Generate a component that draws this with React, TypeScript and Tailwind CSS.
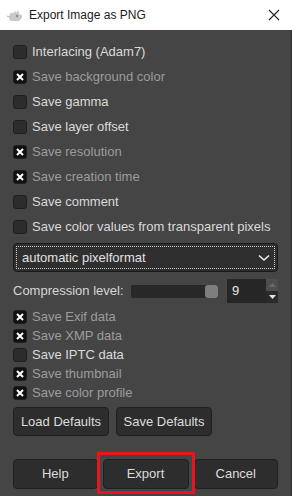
import React from 'react'

type CheckRow = {
  label: string
  checked: boolean
}

const TOP_OPTIONS: CheckRow[] = [
  { label: 'Interlacing (Adam7)', checked: false },
  { label: 'Save background color', checked: true },
  { label: 'Save gamma', checked: false },
  { label: 'Save layer offset', checked: false },
  { label: 'Save resolution', checked: true },
  { label: 'Save creation time', checked: true },
  { label: 'Save comment', checked: false },
  { label: 'Save color values from transparent pixels', checked: false },
]

const META_OPTIONS: CheckRow[] = [
  { label: 'Save Exif data', checked: true },
  { label: 'Save XMP data', checked: true },
  { label: 'Save IPTC data', checked: false },
  { label: 'Save thumbnail', checked: true },
  { label: 'Save color profile', checked: true },
]

const CheckBox: React.FC<{ checked: boolean }> = ({ checked }) => (
  <div
    className={`flex w-[14px] h-[14px] shrink-0 items-center justify-center rounded-[3px] border border-[#1e1e1e] ${
      checked ? 'bg-[#111111]' : 'bg-[#2c2c2c]'
    }`}
  >
    {checked && (
      <svg width="8" height="8" viewBox="0 0 8 8">
        <path d="M1 1 L7 7 M7 1 L1 7" stroke="#ffffff" strokeWidth="2" />
      </svg>
    )}
  </div>
)

const Option: React.FC<CheckRow & { rowClass: string }> = ({
  label,
  checked,
  rowClass,
}) => (
  <div className={`flex items-center gap-[5px] ${rowClass}`}>
    <CheckBox checked={checked} />
    <p className={checked ? 'text-[#9c9c9c]' : 'text-[#dadada]'}>{label}</p>
  </div>
)

const DarkButton: React.FC<{ label: string; className?: string }> = ({
  label,
  className = '',
}) => (
  <div
    className={`flex items-center justify-center rounded-[4px] border border-[#1f1f1f] bg-[#2d2d2d] text-[#dcdcdc] ${className}`}
  >
    {label}
  </div>
)

export default function App() {
  return (
    <div
      className="flex flex-col w-[292px] h-[496px] bg-[#454545] text-[13px] overflow-hidden"
      style={{ fontFamily: '"Liberation Sans", Arial, sans-serif' }}
    >
      {/* title bar */}
      <div className="flex items-center h-[30px] shrink-0 bg-white pl-[7px] pr-[10px]">
        <svg width="17" height="15" viewBox="0 0 17 15" className="shrink-0">
          <path
            d="M2 9 C2 5 5 4 7 5 L8 2 L9 5 L11 2 L12 6 C15 6 16 9 14 11 L12 13 L5 13 C3 13 2 11 2 9 Z"
            fill="#c9c9c9"
          />
          <circle cx="10" cy="8" r="1.3" fill="#8d8d8d" />
          <path d="M0 8 L3 9" stroke="#bdbdbd" strokeWidth="1.2" />
        </svg>
        <p className="ml-[5px] text-[12px] text-[#1b1b1b]">Export Image as PNG</p>
        <svg width="12" height="12" viewBox="0 0 12 12" className="ml-auto mr-[2px]">
          <path d="M1 1 L11 11 M11 1 L1 11" stroke="#222222" strokeWidth="1.1" />
        </svg>
      </div>

      {/* body */}
      <div className="flex flex-col flex-1 pl-[13px] pr-[13px] pt-[9px] border-r border-[#2f2f2f]">
        <div className="flex flex-col">
          {TOP_OPTIONS.map((opt, i) => (
            <Option key={i} {...opt} rowClass="h-[25px]" />
          ))}
        </div>

        {/* format dropdown */}
        <div className="mt-[4px] h-[29px] rounded-[4px] border border-[#1b1b1b] bg-[#2f2f2f] p-[2px]">
          <div className="flex items-center h-full border border-dotted border-[#cfcfcf] pl-[5px] pr-[4px]">
            <p className="text-[#e2e2e2]">automatic pixelformat</p>
            <svg width="12" height="8" viewBox="0 0 12 8" className="ml-auto">
              <path d="M1 1.5 L6 6 L11 1.5" stroke="#eeeeee" strokeWidth="1.6" fill="none" />
            </svg>
          </div>
        </div>

        {/* compression level */}
        <div className="flex items-center mt-[7px] h-[24px]">
          <p className="text-[#d6d6d6] w-[118px] shrink-0">Compression level:</p>
          <div className="flex items-center justify-end w-[89px] h-[13px] bg-[#282828] rounded-[2px]">
            <div className="w-[13px] h-[13px] rounded-[3px] bg-[#7e7e7e]" />
          </div>
          <div className="flex ml-[9px] h-[24px]">
            <div className="flex items-center w-[39px] bg-[#262626] pl-[5px] text-[#e8e8e8]">9</div>
            <div className="flex flex-col w-[12px]">
              <div className="flex flex-1 items-center justify-center bg-[#4e4e4e]">
                <svg width="7" height="4" viewBox="0 0 7 4">
                  <path d="M0 4 L3.5 0 L7 4 Z" fill="#6a6a6a" />
                </svg>
              </div>
              <div className="flex flex-1 items-center justify-center bg-[#2a2a2a]">
                <svg width="7" height="4" viewBox="0 0 7 4">
                  <path d="M0 0 L3.5 4 L7 0 Z" fill="#e6e6e6" />
                </svg>
              </div>
            </div>
          </div>
        </div>

        {/* metadata options */}
        <div className="flex flex-col mt-[4px]">
          {META_OPTIONS.map((opt, i) => (
            <Option key={i} {...opt} rowClass="h-[19px]" />
          ))}
        </div>

        <div className="flex gap-[7px] mt-[5px]">
          <DarkButton label="Load Defaults" className="w-[96px] h-[29px]" />
          <DarkButton label="Save Defaults" className="w-[96px] h-[29px]" />
        </div>

        {/* dialog actions */}
        <div className="flex items-center gap-[5px] mt-[23px]">
          <DarkButton label="Help" className="w-[85px] h-[30px]" />
          <div className="relative">
            <DarkButton label="Export" className="w-[86px] h-[30px]" />
            <div className="absolute left-[-6px] right-[-6px] top-[-7px] bottom-[-5px] border-[3px] border-[#e8141e]" />
          </div>
          <DarkButton label="Cancel" className="w-[85px] h-[30px]" />
        </div>
      </div>
    </div>
  )
}
